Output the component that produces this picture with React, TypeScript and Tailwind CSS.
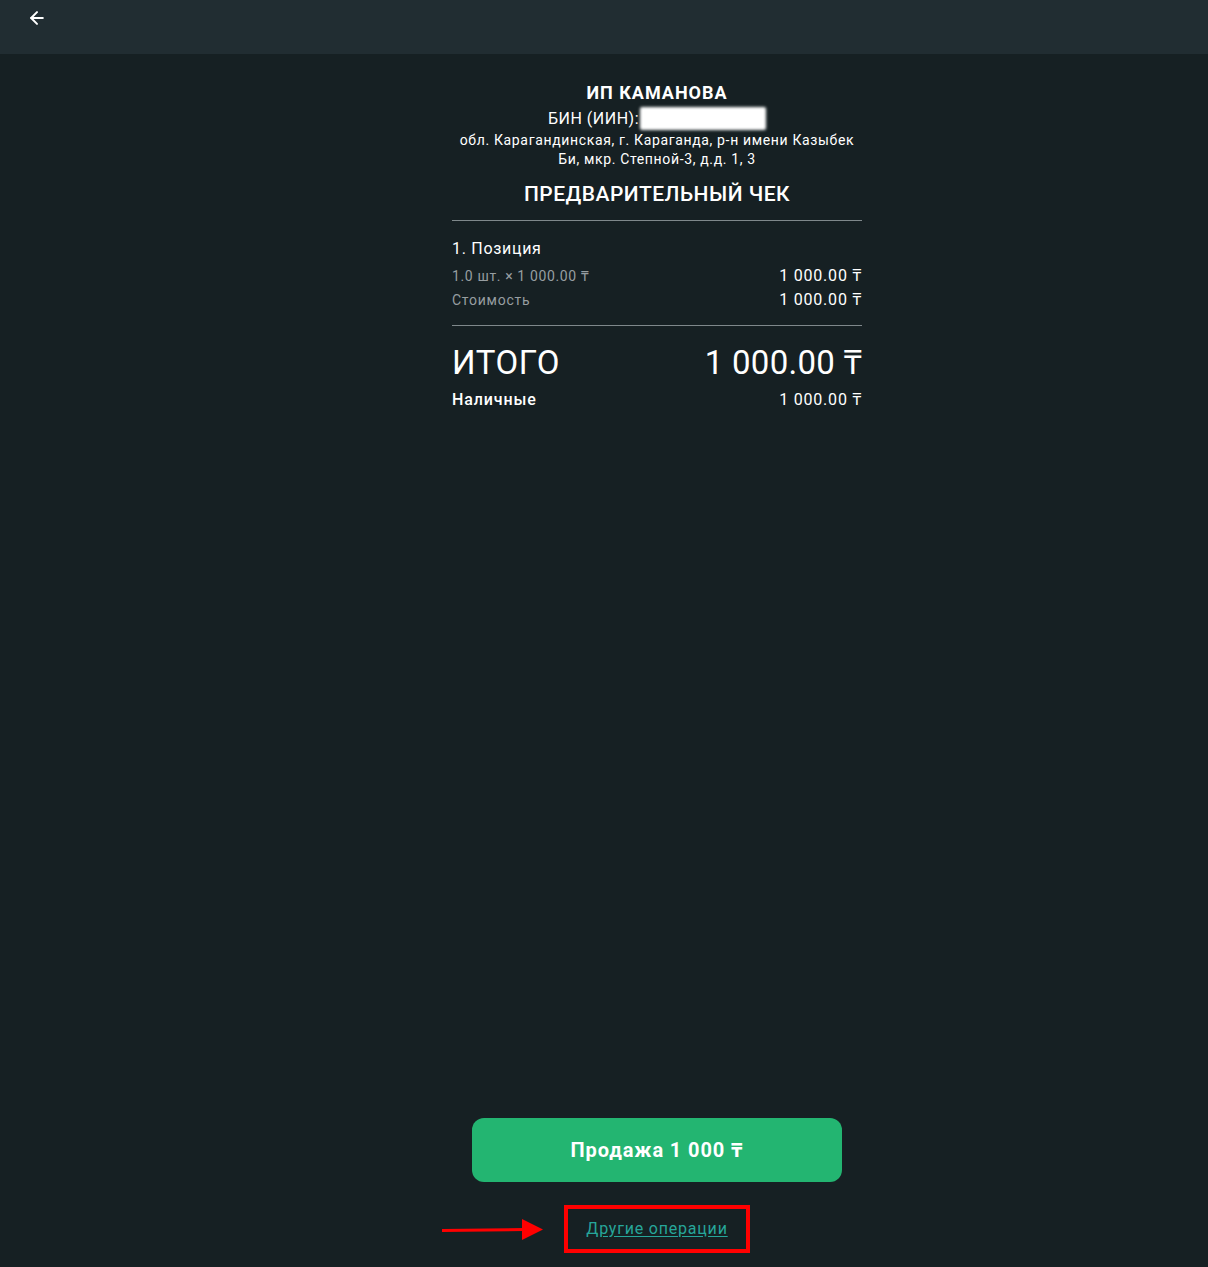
import React from "react";
import { ArrowLeft } from "lucide-react";

export default function App() {
  return (
    <div
      className="min-h-[1267px] flex flex-col bg-[#162023] text-white"
      style={{ fontFamily: "Roboto, 'Noto Sans', sans-serif" }}
    >
      <header className="h-[54px] bg-[#212d32] shrink-0 flex items-start pl-[27px] pt-[8px]">
        <ArrowLeft size={20} strokeWidth={2.4} className="text-white" />
      </header>

      <main className="flex-1 flex flex-col items-center justify-between pl-[106px]">
        <div className="w-[410px] pt-[27px]">
          <div className="text-center text-[18px] font-bold leading-[24px] tracking-[1px]">ИП КАМАНОВА</div>
          <div className="mt-[1px] flex justify-center items-center h-[25px] text-[16px] leading-[25px] tracking-[0.5px]">
            <span>БИН (ИИН):</span>
            <span className="inline-block w-[126px] h-[23px] bg-white rounded-[2px] blur-[1.5px] ml-[1px]" />
          </div>
          <div className="text-center text-[14px] leading-[19px] tracking-[0.65px]">
            обл. Карагандинская, г. Караганда, р-н имени Казыбек
            <br />
            Би, мкр. Степной-3, д.д. 1, 3
          </div>
          <div className="mt-[11px] text-center text-[21px] font-medium leading-[28px] tracking-[0.5px]">
            ПРЕДВАРИТЕЛЬНЫЙ ЧЕК
          </div>
          <div className="mt-[12px] h-px bg-[#7f888b]" />

          <div className="mt-[17px] text-[16px] leading-[22px] tracking-[0.7px]">1. Позиция</div>
          <div className="mt-[6px] flex justify-between items-center h-[20px]">
            <span className="text-[14px] text-[#979ea1] tracking-[0.63px]">1.0 шт. × 1 000.00 ₸</span>
            <span className="text-[16px] tracking-[0.8px]">1 000.00 ₸</span>
          </div>
          <div className="mt-[4px] flex justify-between items-center h-[20px]">
            <span className="text-[14px] text-[#979ea1] tracking-[0.75px]">Стоимость</span>
            <span className="text-[16px] tracking-[0.8px]">1 000.00 ₸</span>
          </div>
          <div className="mt-[15px] h-px bg-[#7f888b]" />

          <div className="mt-[17px] flex justify-between items-center h-[40px]">
            <span className="text-[33px] leading-[40px] tracking-[0.6px]">ИТОГО</span>
            <span className="text-[33px] leading-[40px] tracking-[0.3px]">1 000.00 ₸</span>
          </div>
          <div className="mt-[6px] flex justify-between items-center h-[22px]">
            <span className="text-[16px] font-medium tracking-[0.9px]">Наличные</span>
            <span className="text-[16px] tracking-[0.8px]">1 000.00 ₸</span>
          </div>
        </div>

        <div className="flex flex-col items-center pb-[14px]">
          <button className="w-[370px] h-[64px] rounded-[12px] bg-[#23b571] text-white text-[20px] font-bold tracking-[0.9px]">
            Продажа 1 000 ₸
          </button>
          <div className="relative mt-[23px]">
            <svg
              className="absolute left-[-122px] top-[13px]"
              width="101"
              height="24"
              viewBox="0 0 101 24"
            >
              <line x1="0" y1="12.5" x2="82" y2="11.5" stroke="#ff0000" strokeWidth="3" />
              <polygon points="80,1 101,11.5 80,22" fill="#ff0000" />
            </svg>
            <div className="border-4 border-[#ff0000] w-[186px] h-[48px] flex items-center justify-center">
              <a className="text-[16px] text-[#26a69a] underline underline-offset-2 leading-[20px] tracking-[0.8px]">
                Другие операции
              </a>
            </div>
          </div>
        </div>
      </main>
    </div>
  );
}
